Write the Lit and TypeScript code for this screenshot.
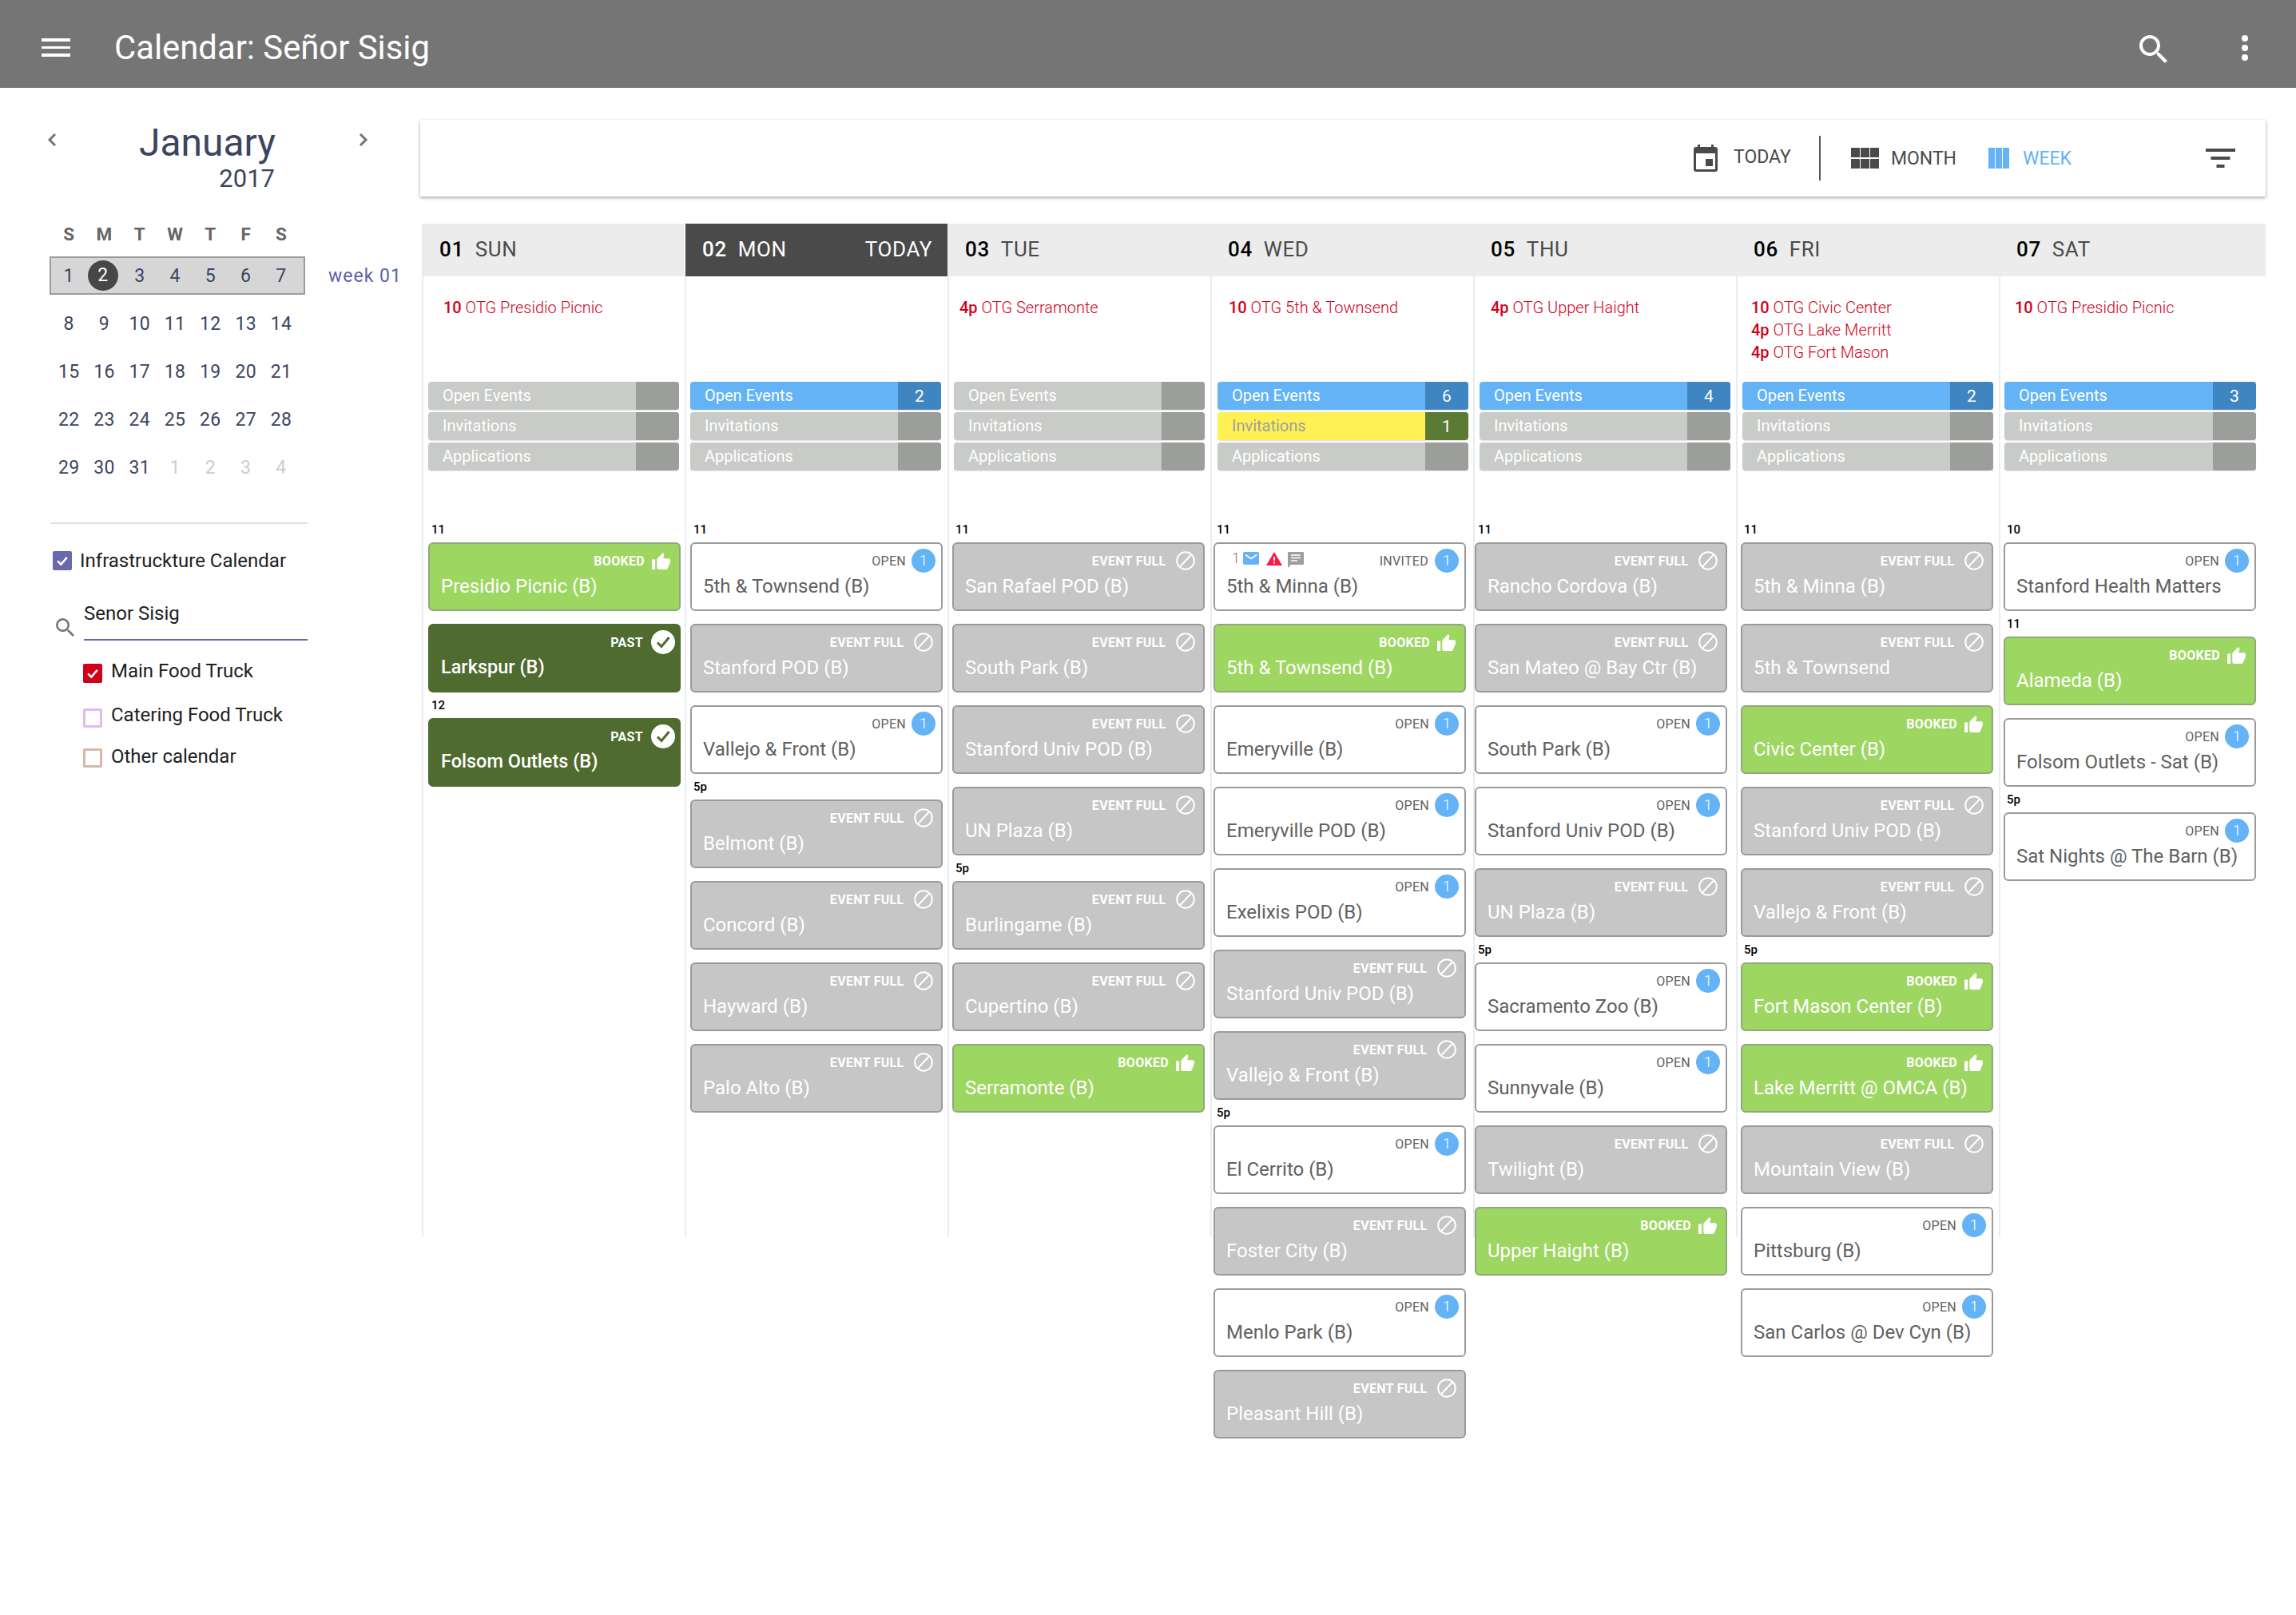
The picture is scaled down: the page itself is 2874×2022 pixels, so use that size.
import { LitElement, html, css, svg } from "lit";
import { customElement } from "lit/decorators.js";

type Kind = "open" | "full" | "booked" | "past" | "invited";
type Card = { k: Kind; t: string; label?: string };
type Day = {
  d: string; w: string; today?: boolean; barX: number; barW: number; cardX: number; evX: number;
  ev: [string, string][]; open?: number; inv?: number; cards: Card[];
};
const c = (k: Kind, t: string, label?: string): Card => ({ k, t, label });

const DAYS: Day[] = [
  { d: "01", w: "SUN", barX: 6, barW: 314, cardX: 6, evX: 25, ev: [["10", "OTG Presidio Picnic"]],
    cards: [c("booked", "Presidio Picnic (B)", "11"), c("past", "Larkspur (B)"), c("past", "Folsom Outlets (B)", "12")] },
  { d: "02", w: "MON", today: true, barX: 5, barW: 314, cardX: 5, evX: 20, ev: [], open: 2,
    cards: [c("open", "5th & Townsend (B)", "11"), c("full", "Stanford POD (B)"), c("open", "Vallejo & Front (B)"),
      c("full", "Belmont (B)", "5p"), c("full", "Concord (B)"), c("full", "Hayward (B)"), c("full", "Palo Alto (B)")] },
  { d: "03", w: "TUE", barX: 6, barW: 314, cardX: 4, evX: 13, ev: [["4p", "OTG Serramonte"]],
    cards: [c("full", "San Rafael POD (B)", "11"), c("full", "South Park (B)"), c("full", "Stanford Univ POD (B)"), c("full", "UN Plaza (B)"),
      c("full", "Burlingame (B)", "5p"), c("full", "Cupertino (B)"), c("booked", "Serramonte (B)")] },
  { d: "04", w: "WED", barX: 7, barW: 314, cardX: 2, evX: 21, ev: [["10", "OTG 5th & Townsend"]], open: 6, inv: 1,
    cards: [c("invited", "5th & Minna (B)", "11"), c("booked", "5th & Townsend (B)"), c("open", "Emeryville (B)"), c("open", "Emeryville POD (B)"),
      c("open", "Exelixis POD (B)"), c("full", "Stanford Univ POD (B)"), c("full", "Vallejo & Front (B)"), c("open", "El Cerrito (B)", "5p"),
      c("full", "Foster City (B)"), c("open", "Menlo Park (B)"), c("full", "Pleasant Hill (B)")] },
  { d: "05", w: "THU", barX: 6, barW: 314, cardX: 0, evX: 20, ev: [["4p", "OTG Upper Haight"]], open: 4,
    cards: [c("full", "Rancho Cordova (B)", "11"), c("full", "San Mateo @ Bay Ctr (B)"), c("open", "South Park (B)"), c("open", "Stanford Univ POD (B)"),
      c("full", "UN Plaza (B)"), c("open", "Sacramento Zoo (B)", "5p"), c("open", "Sunnyvale (B)"), c("full", "Twilight (B)"), c("booked", "Upper Haight (B)")] },
  { d: "06", w: "FRI", barX: 6, barW: 314, cardX: 4, evX: 17, ev: [["10", "OTG Civic Center"], ["4p", "OTG Lake Merritt"], ["4p", "OTG Fort Mason"]], open: 2,
    cards: [c("full", "5th & Minna (B)", "11"), c("full", "5th & Townsend"), c("booked", "Civic Center (B)"), c("full", "Stanford Univ POD (B)"),
      c("full", "Vallejo & Front (B)"), c("booked", "Fort Mason Center (B)", "5p"), c("booked", "Lake Merritt @ OMCA (B)"), c("full", "Mountain View (B)"),
      c("open", "Pittsburg (B)"), c("open", "San Carlos @ Dev Cyn (B)")] },
  { d: "07", w: "SAT", barX: 5, barW: 315, cardX: 4, evX: 18, ev: [["10", "OTG Presidio Picnic"]], open: 3,
    cards: [c("open", "Stanford Health Matters", "10"), c("booked", "Alameda (B)", "11"), c("open", "Folsom Outlets - Sat (B)"), c("open", "Sat Nights @ The Barn (B)", "5p")] },
];

const THUMB = svg`<path d="M1 21h4V9H1v12zm22-11c0-1.1-.9-2-2-2h-6.31l.95-4.57.03-.32c0-.41-.17-.79-.44-1.06L14.17 1 7.59 7.59C7.22 7.95 7 8.45 7 9v10c0 1.1.9 2 2 2h9c.83 0 1.54-.5 1.84-1.22l3.02-7.05c.09-.23.14-.47.14-.73v-2z"/>`;
const SEARCH = svg`<path d="M15.5 14h-.79l-.28-.27A6.471 6.471 0 0 0 16 9.5 6.5 6.5 0 1 0 9.5 16c1.61 0 3.09-.59 4.23-1.57l.27.28v.79l5 4.99L20.49 19l-4.99-5zm-6 0C7.01 14 5 11.99 5 9.5S7.01 5 9.5 5 14 7.01 14 9.5 11.99 14 9.5 14z"/>`;
const CHECK = svg`<path d="M5 12.5l5 5L19 7" fill="none" stroke="#fff" stroke-width="3"/>`;

@customElement("app-root")
export class AppRoot extends LitElement {
  static styles = css`
    :host { display: block; min-height: 2022px; background: #fff; font-family: Roboto, sans-serif; color: #212121; }
    * { box-sizing: border-box; }
    svg { display: block; flex: none; }

    .appbar { height: 110px; background: #757575; display: flex; align-items: center; color: #fff; padding: 0 60px 0 52px; }
    .burger { width: 36px; display: flex; flex-direction: column; gap: 6px; margin: 9px 55px 0 0; }
    .burger i { display: block; height: 3.5px; background: #fff; }
    .title { font-size: 41.8px; line-height: 48px; flex: 1; margin-top: 10px; }
    .appsearch { margin-top: 13px; }
    .dots { display: flex; flex-direction: column; gap: 4px; margin-left: 93px; width: 8px; margin-top: 10px; }
    .dots i { display: block; width: 8px; height: 8px; border-radius: 50%; background: #fff; }

    .main { display: flex; align-items: flex-start; }
    .side { width: 526px; flex: none; padding-top: 41px; }
    .nav { display: grid; grid-template-columns: 12px 274px 1fr 12px; margin: 0 65px 0 59px; width: 402px; }
    .chev { margin-top: 15px; }
    .month { text-align: right; color: #3b4560; grid-column: 2; }
    .month b { display: block; font-weight: 400; font-size: 48px; line-height: 56px; }
    .month span { display: block; font-size: 31px; line-height: 36px; margin: -1px 1px -1px 0; }
    .dow, .wk { display: grid; grid-template-columns: repeat(7, 44.3px); margin-left: 64px; text-align: center; }
    .dow { height: 46px; margin-top: 28px; padding-top: 2px; align-items: center; font-weight: 700; font-size: 22.5px; color: #666; }
    .wk { height: 60px; align-items: center; font-size: 23px; color: #3b4560; letter-spacing: .3px; }
    .curwrap { display: flex; align-items: center; height: 60px; }
    .cur { height: 48px; width: 320px; margin-left: 62px; padding-right: 0; border: 2.5px solid #9b9b9b; background: #d6d6d6; }
    .weeklab { color: #5c62ad; font-size: 23px; margin-left: 29px; letter-spacing: 1px; }
    .dim { color: #c9ccd4; }
    .now { justify-self: center; width: 38px; height: 38px; border-radius: 50%; background: #474747; color: #fff; line-height: 38px; margin-left: -3px; }
    .sep { height: 2px; background: #e0e0e0; width: 322px; margin: 39px 0 0 63px; }
    .chk { width: 24px; height: 24px; border-radius: 2px; flex: none; display: flex; align-items: center; justify-content: center; border: 3px solid; background: #fff; }
    .chk.on { border: 0; }
    .line { display: flex; align-items: center; font-size: 24px; color: #212121; }
    .infra { margin: 32px 0 0 66px; }
    .infra .chk { margin-right: 10px; background: #6969ae; }
    .find { display: flex; margin: 33px 0 0 70px; align-items: flex-start; }
    .find svg { margin-top: 25px; }
    .q { width: 280px; margin-left: 12px; height: 53px; border-bottom: 2px solid #6469b0; font-size: 24px; line-height: 30px; padding-top: 4px; }
    .sub { margin-left: 104px; }
    .sub .chk { margin-right: 11px; }

    .content { flex: 1; padding: 40px 38px 0 0; }
    .toolbar { height: 96px; display: flex; align-items: center; justify-content: flex-end; padding-right: 38px; background: #fff; box-shadow: 0 2px 4px rgba(0,0,0,.32), 0 0 2px rgba(0,0,0,.08); font-size: 23px; color: #4a4a4a; }
    .vr { width: 2px; height: 56px; background: #555; margin: 0 38px 0 35px; }
    .grid { display: grid; grid-template-columns: repeat(6, 329px) 1fr; margin: 34px 0 0 2px; }
    .head { height: 66px; background: #ececec; display: flex; align-items: center; padding: 0 19px 3px 22px; font-size: 26px; letter-spacing: .6px; color: #4a4a4a; }
    .head b { font-weight: 500; color: #000; margin-right: 14px; }
    .head.today { background: #4a4a4a; color: #fff; margin-left: 1px; padding-left: 21px; }
    .head.today b { color: #fff; }
    .head u { text-decoration: none; margin-left: auto; }
    .body { height: 1203px; border-left: 2px solid #e8edf2; }
    .events { height: 132px; padding-top: 25px; font-size: 20px; font-weight: 300; line-height: 28px; color: #d0021b; }
    .events b { font-weight: 500; }
    .bar { height: 35px; margin-bottom: 3px; border-radius: 4px; overflow: hidden; display: flex; background: #c9cbc8; color: #fff; font-size: 20px; line-height: 35px; box-shadow: 0 1px 1px rgba(0,0,0,.12); }
    .bar span { flex: 1; padding-left: 18px; }
    .bar em { width: 54px; flex: none; background: #9c9e9b; font-style: normal; text-align: center; font-size: 21px; line-height: 37px; }
    .bar.blue { background: #63b3f6; }
    .bar.blue em { background: #3f85c2; }
    .bar.yellow { background: #fff154; color: #9e9e9e; }
    .bar.yellow em { background: #5b7a33; color: #fff; }
    .cards { padding-top: 55px; }
    .lab { height: 32px; line-height: 32px; padding-left: 4px; font-size: 15px; font-weight: 500; color: #000; }
    .card { width: 316px; height: 86px; border: 2px solid #9a9a9a; border-radius: 6px; padding: 6px 7px 0 14px; margin-top: 16px; }
    .lab + .card { margin-top: 0; }
    .status { height: 30px; display: flex; align-items: center; justify-content: flex-end; font-size: 16px; letter-spacing: .3px; padding-top: 1px; }
    .status > *:not(span) { margin-top: -1px; }
    .name { font-size: 24px; line-height: 28px; margin-top: 3px; white-space: nowrap; }
    .open, .invited { background: #fff; color: #616161; }
    .full { background: #c6c6c6; color: #fff; }
    .booked { background: #9ed662; color: #fff; border-color: #8fa87c; }
    .past { background: #4f6b2f; color: #fff; border-color: #4f6b2f; padding-right: 5px; }
    .past .name { font-weight: 500; font-size: 23.5px; margin-top: 2px; }
    .full .status, .booked .status, .past .status { font-weight: 700; }
    .num { width: 30px; height: 30px; border-radius: 50%; background: #63b3f6; color: #fff; font-size: 19px; font-weight: 300; text-align: center; line-height: 29px; margin-left: 7px; letter-spacing: 0; }
    .ban { margin: 0 3px 0 12.5px; }
    .thumb { margin: -8px 4px 0 9px; }
    .ok { margin-left: 10px; }
    .alerts { display: flex; align-items: flex-start; margin-right: auto; padding-left: 7px; color: #757575; font-size: 18px; font-weight: 300; height: 30px; }
    .alerts span { line-height: 24px; margin-right: 4px; }
    .alerts svg { margin-right: 9px; margin-top: 4px; }
    .alerts svg:nth-of-type(2) { margin-right: 7px; }
  `;

  renderCal() {
    const rows = [
      [8, 9, 10, 11, 12, 13, 14], [15, 16, 17, 18, 19, 20, 21], [22, 23, 24, 25, 26, 27, 28],
    ];
    return html`
      <div class="dow">${"SMTWTFS".split("").map((x) => html`<span>${x}</span>`)}</div>
      <div class="curwrap">
        <div class="wk cur" style="margin-left:62px">
          <span>1</span><span class="now">2</span><span>3</span><span>4</span><span>5</span><span>6</span><span>7</span>
        </div>
        <span class="weeklab">week 01</span>
      </div>
      ${rows.map((r) => html`<div class="wk">${r.map((n) => html`<span>${n}</span>`)}</div>`)}
      <div class="wk">
        <span>29</span><span>30</span><span>31</span><span class="dim">1</span><span class="dim">2</span><span class="dim">3</span><span class="dim">4</span>
      </div>`;
  }

  renderSide() {
    return html`<aside class="side">
      <div class="nav">
        <svg class="chev" width="12" height="18" viewBox="0 0 12 18"><path d="M10 2L3 9l7 7" fill="none" stroke="#757575" stroke-width="3"/></svg>
        <div class="month"><b>January</b><span>2017</span></div>
        <svg class="chev" style="grid-column:4" width="12" height="18" viewBox="0 0 12 18"><path d="M2 2l7 7-7 7" fill="none" stroke="#757575" stroke-width="3"/></svg>
      </div>
      ${this.renderCal()}
      <div class="sep"></div>
      <div class="line infra">
        <div class="chk on"><svg width="20" height="20" viewBox="0 0 24 24">${CHECK}</svg></div>
        <span>Infrastruckture Calendar</span>
      </div>
      <div class="find">
        <svg width="23" height="23" viewBox="3 3 17.5 17.5" fill="#757575">${SEARCH}</svg>
        <div class="q">Senor Sisig</div>
      </div>
      <div class="line sub" style="margin-top:29px">
        <div class="chk on" style="background:#d0021b"><svg width="20" height="20" viewBox="0 0 24 24">${CHECK}</svg></div>
        <span style="margin-top:-6px">Main Food Truck</span>
      </div>
      <div class="line sub" style="margin-top:32px">
        <div class="chk" style="border-color:#e6b8f0"></div>
        <span style="margin-top:-8px">Catering Food Truck</span>
      </div>
      <div class="line sub" style="margin-top:26px">
        <div class="chk" style="border-color:#d8b8a8"></div>
        <span style="margin-top:-4px">Other calendar</span>
      </div>
    </aside>`;
  }

  renderStatus(k: Kind) {
    if (k === "open") return html`<span>OPEN</span><div class="num">1</div>`;
    if (k === "invited")
      return html`<div class="alerts">
          <span>1</span>
          <svg width="20" height="16" viewBox="0 0 20 16"><rect width="20" height="16" rx="2" fill="#63b3f6"/><path d="M3 3.5l7 5 7-5" fill="none" stroke="#fff" stroke-width="1.6"/></svg>
          <svg width="20" height="17" viewBox="0 0 20 17"><path d="M10 0l10 17H0z" fill="#ff1744"/><rect x="9" y="6" width="2" height="5" fill="#fff"/><rect x="9" y="12.5" width="2" height="2" fill="#fff"/></svg>
          <svg width="20" height="20" viewBox="0 0 20 20"><path d="M1 0h18a1 1 0 0 1 1 1v14a1 1 0 0 1-1 1H4l-4 4V1a1 1 0 0 1 1-1z" fill="#9e9e9e"/><path d="M4 4h12M4 7.5h12M4 11h8" stroke="#fff" stroke-width="1.6"/></svg>
        </div>
        <span>INVITED</span><div class="num" style="margin-left:8px">1</div>`;
    if (k === "full")
      return html`<span>EVENT FULL</span>
        <svg class="ban" width="24" height="24" viewBox="0 0 24 24" fill="none" stroke="#fff" stroke-width="2"><circle cx="12" cy="12" r="10.8"/><path d="M5 19.5L19 4.5"/></svg>`;
    if (k === "booked")
      return html`<span>BOOKED</span><svg class="thumb" width="23" height="21" viewBox="1 1 22 20" fill="#fff">${THUMB}</svg>`;
    return html`<span>PAST</span>
      <svg class="ok" width="30" height="30" viewBox="0 0 30 30"><circle cx="15" cy="15" r="15" fill="#fff"/><path d="M8 15.5l5 5L22.5 9" fill="none" stroke="#4f6b2f" stroke-width="3"/></svg>`;
  }

  renderDay(d: Day) {
    return html`<section>
      <div class="head ${d.today ? "today" : ""}">
        <b>${d.d}</b><span>${d.w}</span>${d.today ? html`<u>TODAY</u>` : ""}
      </div>
      <div class="body">
        <div class="events" style="padding-left:${d.evX}px">
          ${d.ev.map(([a, b]) => html`<div><b>${a}</b> ${b}</div>`)}
        </div>
        <div style="margin-left:${d.barX}px;width:${d.barW}px">
          <div class="bar ${d.open ? "blue" : ""}"><span>Open Events</span><em>${d.open ?? ""}</em></div>
          <div class="bar ${d.inv ? "yellow" : ""}"><span>Invitations</span><em>${d.inv ?? ""}</em></div>
          <div class="bar"><span>Applications</span><em></em></div>
        </div>
        <div class="cards" style="margin-left:${d.cardX}px">
          ${d.cards.map((k) => html`
            ${k.label ? html`<div class="lab">${k.label}</div>` : ""}
            <div class="card ${k.k}">
              <div class="status">${this.renderStatus(k.k)}</div>
              <div class="name">${k.t}</div>
            </div>`)}
        </div>
      </div>
    </section>`;
  }

  render() {
    return html`
      <header class="appbar">
        <div class="burger"><i></i><i></i><i></i></div>
        <div class="title">Calendar: Señor Sisig</div>
        <svg class="appsearch" width="35" height="35" viewBox="3 3 17.5 17.5" fill="#fff">${SEARCH}</svg>
        <div class="dots"><i></i><i></i><i></i></div>
      </header>
      <div class="main">
        ${this.renderSide()}
        <div class="content">
          <div class="toolbar">
            <svg width="30" height="34" viewBox="0 0 30 34" fill="#4a4a4a"><rect x="5" width="3" height="5"/><rect x="22" width="3" height="5"/><rect y="3" width="30" height="31" rx="3"/><rect x="3" y="11" width="24" height="20" fill="#fff"/><rect x="15" y="18" width="9" height="9"/></svg>
            <span style="margin:0 0 4px 20px">TODAY</span>
            <div class="vr"></div>
            <svg width="35" height="26" viewBox="0 0 35 26" fill="#4a4a4a"><rect width="11" height="12"/><rect x="12" width="11" height="12"/><rect x="24" width="11" height="12"/><rect y="14" width="11" height="12"/><rect x="12" y="14" width="11" height="12"/><rect x="24" y="14" width="11" height="12"/></svg>
            <span style="margin-left:15px">MONTH</span>
            <svg style="margin-left:40px" width="26" height="26" viewBox="0 0 26 26" fill="#63b3f6"><rect width="8" height="26"/><rect x="9" width="8" height="26"/><rect x="18" width="8" height="26"/></svg>
            <span style="margin-left:17px;color:#63b3f6">WEEK</span>
            <svg style="margin-left:168px" width="37" height="24" viewBox="0 0 37 24" fill="#4a4a4a"><rect width="37" height="4"/><rect x="6.5" y="10" width="24" height="4"/><rect x="13.5" y="20" width="10" height="4"/></svg>
          </div>
          <div class="grid">${DAYS.map((d) => this.renderDay(d))}</div>
        </div>
      </div>`;
  }
}
